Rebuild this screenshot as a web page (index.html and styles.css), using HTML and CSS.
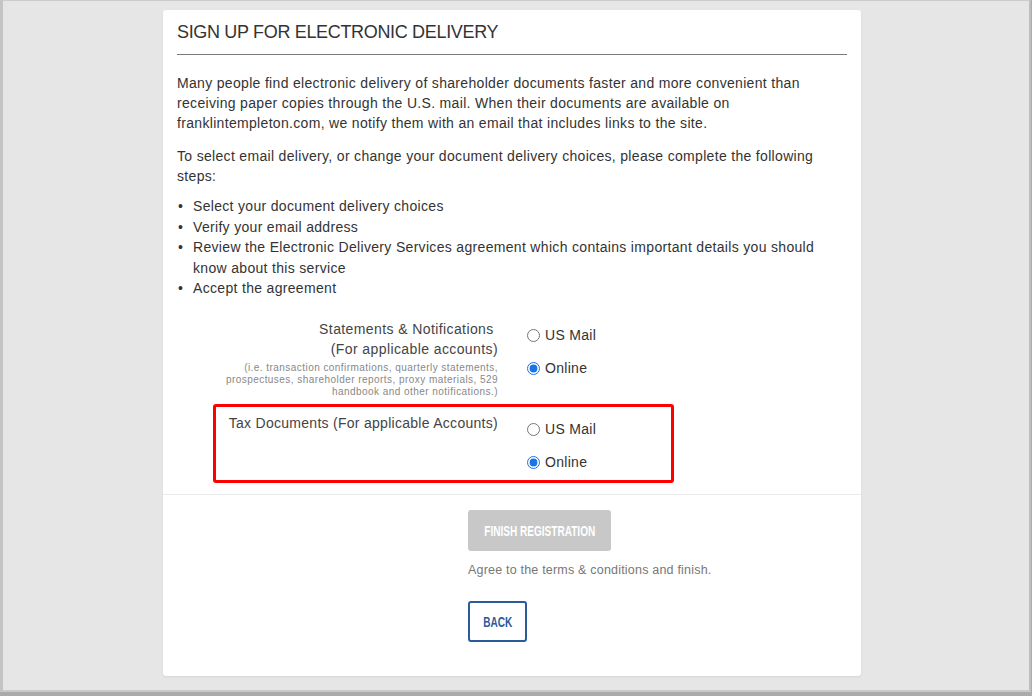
FILE: index.html
```html
<!DOCTYPE html>
<html lang="en">
<head>
<meta charset="utf-8">
<title>Sign up for electronic delivery</title>
<link rel="stylesheet" href="styles.css">
</head>
<body>
<div class="frame">
  <div class="card">
    <h1 class="title">SIGN UP FOR ELECTRONIC DELIVERY</h1>
    <p class="intro">Many people find electronic delivery of shareholder documents faster and more convenient than receiving paper copies through the U.S. mail. When their documents are available on franklintempleton.com, we notify them with an email that includes links to the site.</p>
    <p class="steps-intro">To select email delivery, or change your document delivery choices, please complete the following steps:</p>
    <ul class="steps">
      <li>Select your document delivery choices</li>
      <li>Verify your email address</li>
      <li>Review the Electronic Delivery Services agreement which contains important details you should know about this service</li>
      <li>Accept the agreement</li>
    </ul>
    <div class="form-row">
      <div class="label">
        <div class="label-main">Statements &amp; Notifications&nbsp;<br>(For applicable accounts)</div>
        <div class="label-note">(i.e. transaction confirmations, quarterly statements,<br>prospectuses, shareholder reports, proxy materials, 529<br>handbook and other notifications.)</div>
      </div>
      <div class="options">
        <label class="option"><input type="radio" name="stmt"> <span>US Mail</span></label>
        <label class="option"><input type="radio" name="stmt" checked> <span>Online</span></label>
      </div>
    </div>
    <div class="form-row tax-row">
      <div class="highlight"></div>
      <div class="label">
        <div class="label-main label-tax">Tax Documents (For applicable Accounts)</div>
      </div>
      <div class="options">
        <label class="option"><input type="radio" name="tax"> <span>US Mail</span></label>
        <label class="option"><input type="radio" name="tax" checked> <span>Online</span></label>
      </div>
    </div>
    <div class="separator"></div>
    <div class="actions">
      <button class="btn btn-finish" disabled><span class="btn-text">FINISH REGISTRATION</span></button>
      <div class="agree">Agree to the terms &amp; conditions and finish.</div>
      <button class="btn btn-back"><span class="btn-text">BACK</span></button>
    </div>
  </div>
</div>
</body>
</html>
```

FILE: styles.css
```css
* { box-sizing: border-box; }

html, body {
  margin: 0;
  padding: 0;
  background: #ababab;
  font-family: "Liberation Sans", Arial, sans-serif;
  color: #333;
}

.frame {
  width: 1031px;
  height: 692px;
  background: #e6e6e6;
  border-left: 3px solid #c4c4c4;
  border-top: 1px solid #cbcbcb;
  border-right: 2px solid #bebebe;
  border-bottom: 2px solid #c9c9c9;
  padding: 9px 0 0 160px;
}

.card {
  width: 698px;
  height: 666px;
  background: #fff;
  border-radius: 3px;
  box-shadow: 0 1px 2px rgba(0,0,0,0.08);
  padding: 10px 14px 0 14px;
}

.title {
  margin: 0;
  font-weight: normal;
  font-size: 18px;
  line-height: 24px;
  letter-spacing: -0.33px;
  color: #333;
  padding-bottom: 10px;
  border-bottom: 1px solid #7a7a7a;
}

.intro, .steps-intro {
  font-size: 14px;
  line-height: 20px;
  letter-spacing: 0.32px;
  margin: 18px 0 0 0;
}

.steps-intro { margin-top: 13px; }

.steps {
  list-style: none;
  margin: 10px 0 0 0;
  padding: 0;
  font-size: 14px;
  line-height: 20.5px;
  letter-spacing: 0.32px;
}

.steps li {
  display: flex;
}

.steps li::before {
  content: "\2022";
  flex: 0 0 15px;
  padding-left: 1px;
}

.form-row {
  display: flex;
  gap: 29px;
  margin-top: 20px;
}

.tax-row {
  position: relative;
  margin-top: 15px;
}

.label {
  width: 321px;
  text-align: right;
}

.label-main {
  font-size: 14px;
  line-height: 20px;
  letter-spacing: 0.4px;
  color: #444;
}

.label-tax {
  letter-spacing: 0.28px;
}

.label-note {
  font-size: 10px;
  line-height: 12px;
  letter-spacing: 0.45px;
  color: #888;
  margin-top: 3px;
}

.options {
  display: flex;
  flex-direction: column;
}

.option {
  display: flex;
  align-items: center;
  height: 33px;
  font-size: 14px;
  letter-spacing: 0.3px;
  color: #333;
}

.option input {
  margin: 0 5px 0 0;
  width: 13px;
  height: 13px;
  accent-color: #1a73e8;
}

.highlight {
  position: absolute;
  left: 36px;
  top: -9px;
  width: 461px;
  height: 79px;
  border: 3px solid #ff0000;
  border-radius: 3px;
}

.separator {
  height: 1px;
  background: #e9e9e9;
  margin: 15px -14px 0 -14px;
}

.actions {
  padding: 15px 0 0 291px;
  display: flex;
  flex-direction: column;
  align-items: flex-start;
}

.btn {
  height: 41px;
  border-radius: 3px;
  display: flex;
  align-items: center;
  justify-content: center;
  font-family: "Liberation Sans", Arial, sans-serif;
  font-weight: bold;
  font-size: 15px;
  padding: 0;
  overflow: hidden;
}

.btn-text {
  display: inline-block;
  transform: scaleX(0.67);
  white-space: nowrap;
}

.btn-finish {
  width: 143px;
  background: #c8c8c8;
  border: none;
  color: #fff;
}

.btn-back {
  width: 59px;
  background: #fff;
  border: 2px solid #2d5b9a;
  color: #2d5b9a;
  margin-top: 22px;
}

.agree {
  font-size: 12.5px;
  line-height: 18px;
  color: #777;
  margin-top: 10px;
  letter-spacing: 0.2px;
}
```
